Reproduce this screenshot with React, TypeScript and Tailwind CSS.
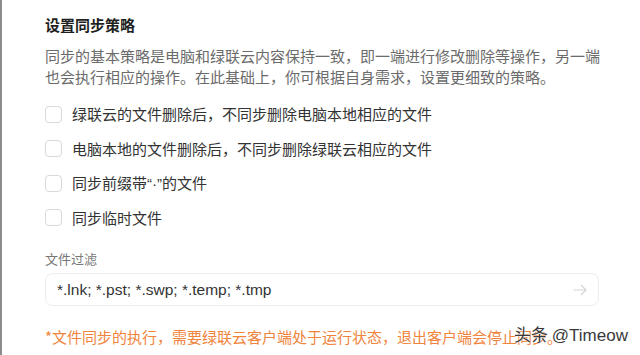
const options: React.ReactNode[] = [
  "绿联云的文件删除后，不同步删除电脑本地相应的文件",
  "电脑本地的文件删除后，不同步删除绿联云相应的文件",
  <>
    同步前缀带
    <span style={{ fontFamily: '"Liberation Sans", Arial, sans-serif' }}>“·”</span>
    的文件
  </>,
  "同步临时文件",
];

export default function App() {
  return (
    <div
      className="relative w-[640px] h-[355px] overflow-hidden bg-white border-l-2 border-[#8c8c8c]"
      style={{ fontFamily: '"Noto Sans CJK SC", "Noto Sans", sans-serif' }}
    >
      <div className="pl-[43px] pt-[15px]">
        <h2 className="text-[15px] leading-[20px] font-bold text-[#1f1f1f]">设置同步策略</h2>
        <p className="mt-[10px] text-[15px] leading-[21px] text-[#6b6b6b] whitespace-nowrap">
          同步的基本策略是电脑和绿联云内容保持一致，即一端进行修改删除等操作，另一端
          <br />
          也会执行相应的操作。在此基础上，你可根据自身需求，设置更细致的策略。
        </p>
        <ul className="mt-[10px] flex flex-col">
          {options.map((o, i) => (
            <li key={i} className="h-[34.5px] flex items-center gap-[10px]">
              <span className="w-[17px] h-[17px] rounded-[4px] border border-[#d9d9d9] bg-white" />
              <span className="text-[15px] leading-[20px] text-[#333]">{o}</span>
            </li>
          ))}
        </ul>
        <div className="mt-[15px] text-[13px] leading-[18px] text-[#777]">文件过滤</div>
        <div className="mt-[5px] w-[554px] h-[33px] rounded-[8px] border border-[#ececec] flex items-center justify-between pl-[11px] pr-[10px]">
          <span
            className="text-[15.5px] text-[#333]"
            style={{ fontFamily: '"Liberation Sans", Arial, sans-serif' }}
          >
            *.lnk; *.pst; *.swp; *.temp; *.tmp
          </span>
          <svg width="16" height="16" viewBox="0 0 16 16" fill="none" stroke="#d4d4d4" strokeWidth="1.2" strokeLinecap="round" strokeLinejoin="round">
            <path d="M2 8h12M9.5 3.5 14 8l-4.5 4.5" />
          </svg>
        </div>
        <p className="mt-[20px] text-[15px] leading-[22px] text-[#f0843c] whitespace-nowrap">
          *文件同步的执行，需要绿联云客户端处于运行状态，退出客户端会停止同步。
        </p>
      </div>
      <div
        className="absolute left-[512px] top-[322px] text-[17px] leading-[24px] text-[#3a3a3a] whitespace-nowrap"
        style={{ textShadow: "0 0 2px #fff, 0 0 1px #fff" }}
      >
        头条 <span style={{ fontFamily: '"Liberation Sans", Arial, sans-serif' }}>@Timeow</span>
      </div>
    </div>
  );
}
